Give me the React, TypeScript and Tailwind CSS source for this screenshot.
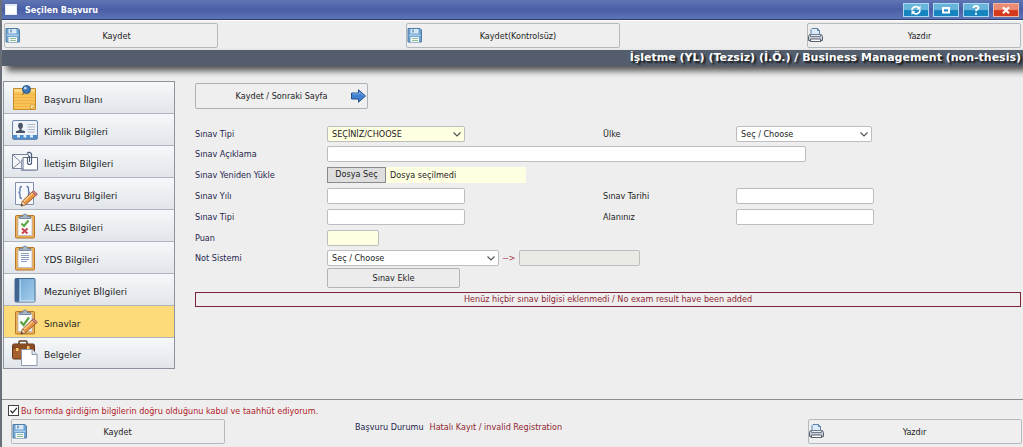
import { useRef } from 'react';
import type { ReactNode } from 'react';
import clsx from 'clsx';

function SaveIcon() {
  return (
    <svg viewBox="0 0 15 15" className="w-[15px] h-[15px] shrink-0">
      <path d="M1 .5h12l1.5 1.5v12H1z" fill="#6fa3cf" stroke="#4f7ca6" />
      <path d="M3.5 1h8v4.5h-8z" fill="#d9e9f5" />
      <path d="M5 1.5h2v3H5z" fill="#7fa9cc" />
      <path d="M2 6.5h11.5v1.5H2z" fill="#a9cdea" />
      <path d="M3.5 9h8.5v5H3.5z" fill="#f4f8f5" />
      <path d="M5 10.5h6M5 12.5h6" stroke="#8ebd9a" />
    </svg>
  );
}

function PrintIcon() {
  return (
    <svg viewBox="0 0 15 15" className="w-[15px] h-[15px] shrink-0">
      <path d="M3 7V1.5L4 .5h5.5l2 2V7z" fill="#dcebf8" stroke="#5f82a8" />
      <path d="M9.5.5v2h2" fill="none" stroke="#5f82a8" />
      <path d="M2.5 6.5h-1l-1 2v4h1.5v1h11v-1h1.5v-4l-1-2h-1" fill="#c9ced8" stroke="#59626f" />
      <path d="M2.5 6.5h10v2h-10z" fill="#e9eef5" stroke="#6f7b8c" />
      <path d="M2.5 11h10v2.5h-10z" fill="#fff" stroke="#59626f" />
    </svg>
  );
}

function NoteIcon() {
  return (
    <svg viewBox="0 0 26 26" className="w-[26px] h-[26px]">
      <path d="M1.5 3.5h22v21h-22z" fill="#f8c352" stroke="#c58a2a" />
      <path d="M2 4h21v3H2z" fill="#fbd987" />
      <path d="M2 9.5h21M2 12.5h21M2 15.5h21M2 18.5h21M2 21.5h16" stroke="#efb44c" />
      <path d="M18.5 24.5v-4.5h5z" fill="#fff0c2" stroke="#c58a2a" strokeWidth=".7" />
      <path d="M13 7l-3 3" stroke="#7a6a4a" />
      <circle cx="14.5" cy="4.5" r="4" fill="#3f77b5" stroke="#2b5585" />
      <circle cx="13.3" cy="3.2" r="1.4" fill="#b9d9f2" />
    </svg>
  );
}

function IdCardIcon() {
  return (
    <svg viewBox="0 0 26 26" className="w-[26px] h-[26px]">
      <rect x=".5" y="3.5" width="25" height="19" rx="1.5" fill="#eef4fa" stroke="#6b86a8" />
      <path d="M1 18h24v4H1z" fill="#4d8ccb" />
      <path d="M5 18.5a2 2 0 0 1 3 0v2H5zM11.5 18.5a2 2 0 0 1 3 0v2h-3zM18 18.5a2 2 0 0 1 3 0v2h-3z" fill="#dcebf8" />
      <ellipse cx="8.5" cy="8.7" rx="2.4" ry="2.9" fill="#4b5568" />
      <path d="M7.5 11h2v2l3.5 1.2V16H4v-1.8L7.5 13z" fill="#4b5568" />
      <path d="M15.5 7.5h7.5M15.5 10h7.5M15.5 12.5h7.5M15.5 15h7.5" stroke="#b0bccb" />
    </svg>
  );
}

function MailIcon() {
  return (
    <svg viewBox="0 0 26 26" className="w-[26px] h-[26px]">
      <path d="M.5 5.5h16v14H.5z" fill="#f5f7fb" stroke="#77839b" />
      <path d="M.5 5.5l8 7.5-8 6.5" fill="none" stroke="#77839b" />
      <path d="M11 8.5h14.5v12.5H11z" fill="#fff" stroke="#66718a" />
      <path d="M11 11h-1.5v10.5h14" fill="none" stroke="#8d99b0" />
      <path d="M15.5 8v5.5a2 2 0 0 0 4 0V5a2.500 2.500 0 0 0-4.500-.5" fill="none" stroke="#4f5f7c" strokeWidth="1.2" />
      <path d="M17.5 7v6" stroke="#4f5f7c" />
    </svg>
  );
}

function Pencil() {
  return (
    <g>
      <path d="M9 25l1.500-5L21 10l4 3.500L14 23.500z" fill="#e8913d" stroke="#8a5424" strokeWidth=".8" />
      <path d="M12 20.500L22 11" stroke="#f9cf8f" strokeWidth="1.300" />
      <path d="M20 11l1.500-1.500 4 3.500-1.500 1.500z" fill="#d98a8f" stroke="#8a5054" strokeWidth=".7" />
      <path d="M9 25l1.500-5 3.500 3.500z" fill="#f6dfb8" stroke="#8a5424" strokeWidth=".6" />
      <path d="M9 25l.7-2.300 1.700 1.500z" fill="#333" />
    </g>
  );
}

function CodeIcon() {
  return (
    <svg viewBox="0 0 26 26" className="w-[26px] h-[26px]">
      <path d="M3.5 1.500h18v22h-18z" fill="#f7f9fd" stroke="#8291b0" />
      <path d="M10 5.500q-2 0-2 2V10q0 1.500-1.500 1.500Q8 11.500 8 13v2.500q0 2 2 2M14.500 5.500q2 0 2 2V10q0 1.500 1.500 1.500-1.500 0-1.500 1.500v2" fill="none" stroke="#5a76ad" strokeWidth="1.300" />
      <Pencil />
    </svg>
  );
}

function ClipboardIcon({ children }: { children: ReactNode }) {
  return (
    <svg viewBox="0 0 26 26" className="w-[26px] h-[26px]">
      <rect x="3.500" y="2.500" width="19" height="22.500" rx="1" fill="#eeae55" stroke="#b5762b" />
      <path d="M6 5h14v17.500H6z" fill="#fbfcfe" stroke="#a9b4c4" strokeWidth=".7" />
      <path d="M7.500 5.500V3.500h3q.3-2.500 2.500-2.500t2.500 2.500h3v2z" fill="#a7b6c8" stroke="#647890" strokeWidth=".8" />
      {children}
    </svg>
  );
}

function AlesIcon() {
  return (
    <ClipboardIcon>
      <path d="M9.500 10.500l2.500 2.500 4.500-5.500" fill="none" stroke="#57a540" strokeWidth="2" />
      <path d="M10 15.500l5.500 5M15.500 15.500l-5.500 5" stroke="#c74350" strokeWidth="2" />
    </ClipboardIcon>
  );
}

function YdsIcon() {
  return (
    <ClipboardIcon>
      <path d="M9 8.500h8M9 10.500h8M9 12.500h8M9 14.500h8M9 16.500h6" stroke="#8a9bbd" />
    </ClipboardIcon>
  );
}

function BookIcon() {
  return (
    <svg viewBox="0 0 26 26" className="w-[26px] h-[26px]">
      <defs>
        <linearGradient id="cover" x1="0" y1="0" x2="1" y2="1">
          <stop offset="0" stopColor="#6ba3d2" />
          <stop offset="1" stopColor="#a6d0ee" />
        </linearGradient>
      </defs>
      <rect x="3" y="1.500" width="20" height="23.500" rx="1" fill="url(#cover)" stroke="#446a92" />
      <path d="M3 2h4v22.500H3z" fill="#41658f" />
      <path d="M7.500 24h15" stroke="#e7f0f8" />
      <path d="M8.500 2.500v21" stroke="#c5e0f4" strokeWidth=".7" />
    </svg>
  );
}

function ExamIcon() {
  return (
    <ClipboardIcon>
      <path d="M8.500 12.500l3 3.500 5.500-7.500" fill="none" stroke="#57a540" strokeWidth="2.200" />
      <Pencil />
    </ClipboardIcon>
  );
}

function BriefcaseIcon() {
  return (
    <svg viewBox="0 0 26 26" className="w-[26px] h-[26px]">
      <path d="M7 4V2q0-1 1-1h6q1 0 1 1v2" fill="none" stroke="#5f3a20" strokeWidth="1.500" />
      <rect x=".5" y="4" width="22" height="15" rx="1.500" fill="#a5602e" stroke="#65381b" />
      <path d="M1 5h21v4H1z" fill="#8a4b22" />
      <path d="M4 8h2.500v3H4zM15 6h2.500v3H15z" fill="#f0c56a" />
      <path d="M9.500 9.500h10.500l5 5v11h-15.500z" fill="#fff" stroke="#8b98ad" />
      <path d="M20 9.500v5h5" fill="#dfe6f0" stroke="#8b98ad" />
    </svg>
  );
}

const menu = [
  { label: 'Başvuru İlanı', icon: NoteIcon },
  { label: 'Kimlik Bilgileri', icon: IdCardIcon },
  { label: 'İletişim Bilgileri', icon: MailIcon },
  { label: 'Başvuru Bilgileri', icon: CodeIcon },
  { label: 'ALES Bilgileri', icon: AlesIcon },
  { label: 'YDS Bilgileri', icon: YdsIcon },
  { label: 'Mezuniyet Bİlgileri', icon: BookIcon },
  { label: 'Sınavlar', icon: ExamIcon, active: true },
  { label: 'Belgeler', icon: BriefcaseIcon },
];

const windowButtons = [
  {
    label: 'Yenile',
    glyph: (
      <>
        <path d="M9 7.500a4 4 0 0 1 7-2.500M17 7a4 4 0 0 1-7 2.500" fill="none" stroke="#fff" strokeWidth="1.600" />
        <path d="M17.500 2.500v4h-4zM8.500 12V8h4z" fill="#fff" />
      </>
    ),
  },
  { label: 'Ekranı kapla', glyph: <path d="M10 5h6v4.500h-6z" fill="none" stroke="#fff" strokeWidth="2" /> },
  {
    label: 'Yardım',
    glyph: (
      <path d="M10.500 5q0-2 2.500-2t2.500 1.800q0 1.200-1.300 1.700-1.200.5-1.200 1.700M13 9.800v2" fill="none" stroke="#fff" strokeWidth="1.900" />
    ),
  },
  {
    label: 'Kapat',
    close: true,
    glyph: <path d="M10 4.200l6 6M16 4.200l-6 6" stroke="#fff" strokeWidth="2.200" />,
  },
];

const field = 'h-4 rounded-xs border border-[#bdbdbd] px-1 text-[#222]';

function ToolButton({ icon, footer, children }: { icon: ReactNode; footer?: boolean; children: ReactNode }) {
  return (
    <button
      type="button"
      className="flex h-[25px] w-[214px] items-center rounded-xs border border-[#b4b9be] bg-[#efefef] text-[#222]"
    >
      {icon}
      <span className={clsx('flex-1 text-center', footer ? 'pr-4' : 'pr-1')}>{children}</span>
    </button>
  );
}

function Select({
  id,
  option,
  required,
  className,
}: {
  id: string;
  option: string;
  required?: boolean;
  className: string;
}) {
  return (
    <div className={clsx('relative', className)}>
      <select
        id={id}
        className={clsx(field, 'block w-full appearance-none', required ? 'bg-[#ffffe1]' : 'bg-white')}
      >
        <option>{option}</option>
      </select>
      <svg viewBox="0 0 8 5" className="pointer-events-none absolute right-1 top-1.5 h-[5px] w-2">
        <path d="M.5.5L4 4 7.500.5" fill="none" stroke="#555" strokeWidth="1.200" />
      </svg>
    </div>
  );
}

function Row({ short, children }: { short?: boolean; children: ReactNode }) {
  return (
    <div className={clsx('grid grid-cols-[132fr_276fr_133fr_285fr] items-center', short ? 'h-5' : 'h-[21px]')}>
      {children}
    </div>
  );
}

function FilePicker() {
  const input = useRef<HTMLInputElement>(null);
  return (
    <div className="flex h-4 w-[199px] items-center bg-[#ffffe1] text-[#222]">
      <input ref={input} id="dosya" type="file" className="sr-only" />
      <button
        type="button"
        onClick={() => input.current?.click()}
        className="h-4 w-[59px] shrink-0 border border-[#8a8a8a] bg-[#dedede] leading-none"
      >
        Dosya Seç
      </button>
      <span className="pl-1">Dosya seçilmedi</span>
    </div>
  );
}

export default function App() {
  return (
    <div className="flex min-h-screen flex-col border-l-2 border-[#6b6f78] bg-[#eeeeee] font-['DejaVu_Sans_Condensed','DejaVu_Sans',sans-serif] text-[9px] leading-3">
      <header className="flex h-5 items-center justify-between border-b border-[#2f3c74] bg-linear-to-b from-[#6076b3] via-[#4a5ea6] to-[#5d74b6] pl-[3px] pr-1">
        <div className="flex items-center gap-2">
          <span className="h-[11px] w-3 border border-t-2 border-[#e3e9f5] bg-white" />
          <h1 className="font-bold text-white">Seçilen Başvuru</h1>
        </div>
        <div className="flex gap-1">
          {windowButtons.map((b) => (
            <button
              key={b.label}
              type="button"
              aria-label={b.label}
              className={clsx(
                'h-[14px] w-[26px] border',
                b.close
                  ? 'border-[#f0b8a8] bg-linear-to-b from-[#ec8b74] from-45% to-[#d5391c] to-55%'
                  : 'border-[#a9d8ef] bg-linear-to-b from-[#68b5dc] from-45% to-[#1684bf] to-55%',
              )}
            >
              <svg viewBox="0 0 26 14" className="-m-px h-[14px] w-[26px] max-w-none">
                {b.glyph}
              </svg>
            </button>
          ))}
        </div>
      </header>

      <div className="flex h-[30px] items-center justify-between border-t border-white pl-0.5 pr-0.5">
        <ToolButton icon={<SaveIcon />}>Kaydet</ToolButton>
        <ToolButton icon={<SaveIcon />}>Kaydet(Kontrolsüz)</ToolButton>
        <ToolButton icon={<PrintIcon />}>Yazdır</ToolButton>
      </div>

      <div className="h-4 bg-[#535d6b] pr-0.5 text-right font-['DejaVu_Sans',sans-serif] text-[11px] font-bold leading-4 text-white shadow-[5px_5px_6px_#555] text-shadow-[2px_2px_2px_#111]">
        İşletme (YL) (Tezsiz) (İ.Ö.) / Business Management (non-thesis)
      </div>

      <div className="flex flex-1 gap-5 pt-[15px] pl-px pr-0.5">
        <nav className="w-[172px] shrink-0 self-start border border-[#8d939c] bg-white font-['DejaVu_Sans',sans-serif]">
          {menu.map(({ label, icon: Icon, active }) => (
            <a
              key={label}
              href="#"
              className={clsx(
                'flex h-8 items-center gap-1.5 border-b border-[#aeb4bd] pl-2 text-[#222] last:h-[30px] last:border-b-0',
                active ? 'bg-[#fdda7a]' : 'bg-linear-to-b from-[#f6f8fa] to-[#e1e5ea]',
              )}
            >
              <Icon />
              <span className="pt-1">{label}</span>
            </a>
          ))}
        </nav>

        <form className="min-w-0 flex-1 pt-0.5 text-[#1f1f4d]">
          <button
            type="button"
            className="relative mb-[15px] block h-[26px] w-[173px] rounded-xs border border-[#aab2ba] bg-[#efefef] text-[#222]"
          >
            Kaydet / Sonraki Sayfa
            <svg viewBox="0 0 15 14" className="absolute right-px top-[5px] h-[14px] w-[15px]">
              <path d="M.5 4h7V.8L14.500 7l-7 6.200V10h-7z" fill="#3f7fd0" stroke="#274f8c" />
              <path d="M1.500 5h7V3l4 4" fill="none" stroke="#79aee8" />
            </svg>
          </button>

          <Row short>
            <label htmlFor="sinavTipi">Sınav Tipi</label>
            <Select id="sinavTipi" option="SEÇİNİZ/CHOOSE" required className="w-[138px]" />
            <label htmlFor="ulke" className="text-[#222]">Ülke</label>
            <Select id="ulke" option="Seç / Choose" className="w-[136px]" />
          </Row>
          <Row short>
            <label htmlFor="aciklama">Sınav Açıklama</label>
            <div className="col-span-3 flex">
              <input id="aciklama" type="text" className={clsx(field, 'w-[479px] bg-white')} />
            </div>
          </Row>
          <Row>
            <label htmlFor="dosya">Sınav Yeniden Yükle</label>
            <FilePicker />
          </Row>
          <Row>
            <label htmlFor="yil">Sınav Yılı</label>
            <input id="yil" type="text" className={clsx(field, 'w-[138px] bg-white')} />
            <label htmlFor="tarih" className="text-[#222]">Sınav Tarihi</label>
            <input id="tarih" type="text" className={clsx(field, 'w-[138px] bg-white')} />
          </Row>
          <Row>
            <label htmlFor="tip">Sınav Tipi</label>
            <input id="tip" type="text" className={clsx(field, 'w-[138px] bg-white')} />
            <label htmlFor="alan" className="text-[#222]">Alanınız</label>
            <input id="alan" type="text" className={clsx(field, 'w-[138px] bg-white')} />
          </Row>
          <Row>
            <label htmlFor="puan">Puan</label>
            <input id="puan" type="text" className={clsx(field, 'w-[52px] bg-[#ffffe1]')} />
          </Row>
          <Row short>
            <label htmlFor="notSistemi">Not Sistemi</label>
            <div className="col-span-3 flex items-center">
              <Select id="notSistemi" option="Seç / Choose" className="w-[172px]" />
              <span className="w-5 text-center text-[#a8323c]">--&gt;</span>
              <input type="text" disabled aria-label="Not" className={clsx(field, 'w-[121px] bg-[#ebebe6]')} />
            </div>
          </Row>
          <div className="grid grid-cols-[132fr_694fr]">
            <button
              type="button"
              className="col-start-2 h-5 w-[133px] rounded-xs border border-[#b0b5ba] bg-[#ececec] text-[#222]"
            >
              Sınav Ekle
            </button>
          </div>

          <p className="mt-1 h-[15px] border border-[#7a2638] text-center leading-[13px] text-[#8f1f30]">
            Henüz hiçbir sınav bilgisi eklenmedi / No exam result have been added
          </p>
        </form>
      </div>

      <footer className="h-12 border-t border-[#8c8c8c] pl-1.5 pr-px pt-[3px]">
        <label className="flex w-max items-center gap-0.5 text-[#b01c2a]">
          <span className="relative h-[11px] w-[11px]">
            <input type="checkbox" defaultChecked className="peer block h-[11px] w-[11px] appearance-none border border-[#444] bg-white" />
            <svg viewBox="0 0 11 11" className="pointer-events-none absolute inset-0 hidden peer-checked:block">
              <path d="M2.500 5.500l2 2.300 4.500-5" fill="none" stroke="#222" strokeWidth="1.200" />
            </svg>
          </span>
          <span className="pt-0.5">Bu formda girdiğim bilgilerin doğru olduğunu kabul ve taahhüt ediyorum.</span>
        </label>
        <div className="flex items-start justify-between pl-[3px] pt-0.5">
          <ToolButton icon={<SaveIcon />} footer>Kaydet</ToolButton>
          <p className="mr-auto ml-[130px] flex gap-1.5 pt-0.5">
            <span className="text-[#1f1f4d]">Başvuru Durumu</span>
            <span className="text-[#8f1f30]">Hatalı Kayıt / invalid Registration</span>
          </p>
          <ToolButton icon={<PrintIcon />} footer>Yazdır</ToolButton>
        </div>
      </footer>
    </div>
  );
}
